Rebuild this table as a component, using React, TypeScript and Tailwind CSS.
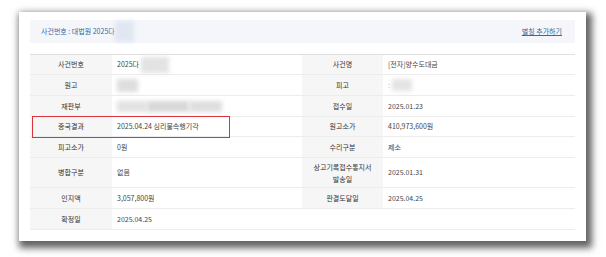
/* Case detail card: header bar + info table */

const font = { fontFamily: '"Noto Sans CJK KR", "Noto Sans", sans-serif' };

interface Row {
  h: string;
  l1: string;
  v1: React.ReactNode;
  l2?: React.ReactNode;
  v2?: React.ReactNode;
}

const Blur = ({ className }: { className: string }) => (
  <span className={`inline-block blur-[2px] ${className}`} />
);

const rows: Row[] = [
  {
    h: "h-[20px]",
    l1: "사건번호",
    v1: (
      <span className="flex items-center">
        2025다
        <Blur className="ml-[2px] h-[16px] w-[28px] bg-[#e3e3e3]" />
      </span>
    ),
    l2: "사건명",
    v2: "[전자]양수도대금",
  },
  {
    h: "h-[21px]",
    l1: "원고",
    v1: <Blur className="h-[13px] w-[21px] bg-[#dedede]" />,
    l2: "피고",
    v2: (
      <span className="flex items-center">
        <span className="text-[#bbb]">:</span>
        <Blur className="ml-[2px] h-[12px] w-[20px] bg-[#e4e4e4]" />
      </span>
    ),
  },
  {
    h: "h-[21px]",
    l1: "재판부",
    v1: (
      <span className="flex">
        <Blur className="h-[11px] w-[30px] bg-[#e2e2e2]" />
        <Blur className="h-[11px] w-[42px] bg-[#d8d8d8]" />
        <Blur className="h-[11px] w-[33px] bg-[#dedede]" />
      </span>
    ),
    l2: "접수일",
    v2: "2025.01.23",
  },
  {
    h: "h-[20px]",
    l1: "종국결과",
    v1: "2025.04.24 심리불속행기각",
    l2: "원고소가",
    v2: "410,973,600원",
  },
  { h: "h-[21px]", l1: "피고소가", v1: "0원", l2: "수리구분", v2: "제소" },
  {
    h: "h-[30px]",
    l1: "병합구분",
    v1: "없음",
    l2: (
      <span className="leading-[12px]">
        상고기록접수통지서
        <br />
        발송일
      </span>
    ),
    v2: "2025.01.31",
  },
  {
    h: "h-[21px]",
    l1: "인지액",
    v1: "3,057,800원",
    l2: "판결도달일",
    v2: "2025.04.25",
  },
  { h: "h-[21px]", l1: "확정일", v1: "2025.04.25" },
];

const labelCls =
  "flex items-center justify-center bg-[#f6f6f6] text-center text-[#333]";
const valueCls = "flex items-center pl-[5px] text-[#444]";

export default function App() {
  return (
    <div className="h-[257px] w-[606px] overflow-hidden bg-white pt-[12px]" style={font}>
      <div className="ml-[19px] h-[229px] w-[567px] bg-white px-[11px] pt-[8px] shadow-[3px_4px_7px_3px_rgba(0,0,0,0.62)]">
        {/* header bar */}
        <div className="flex h-[23px] items-center justify-between bg-[#f4f6f9] pl-[11px] pr-[13px] text-[7px] text-[#3a66a3]">
          <span className="flex items-center">
            사건번호 : 대법원 2025다
            <Blur className="h-[21px] w-[19px] bg-[#e0e7f1]" />
          </span>
          <span className="underline underline-offset-1">별칭 추가하기</span>
        </div>

        {/* info table */}
        <div className="relative mt-[11px] border-t border-[#e0e0e0] text-[7px]">
          {rows.map((r) => (
            <div
              key={r.l1}
              className={`grid grid-cols-[82px_190px_81px_192px] border-b border-[#ececec] ${r.h}`}
            >
              <div className={labelCls}>{r.l1}</div>
              {r.l2 ? (
                <>
                  <div className={valueCls}>{r.v1}</div>
                  <div className={labelCls}>{r.l2}</div>
                  <div className={valueCls}>{r.v2}</div>
                </>
              ) : (
                <div className={`${valueCls} col-span-3`}>{r.v1}</div>
              )}
            </div>
          ))}
          {/* highlight on 종국결과 */}
          <div className="pointer-events-none absolute left-[2px] top-[61px] h-[22px] w-[198px] border-[1.5px] border-[#d9343c]" />
        </div>
      </div>
    </div>
  );
}
